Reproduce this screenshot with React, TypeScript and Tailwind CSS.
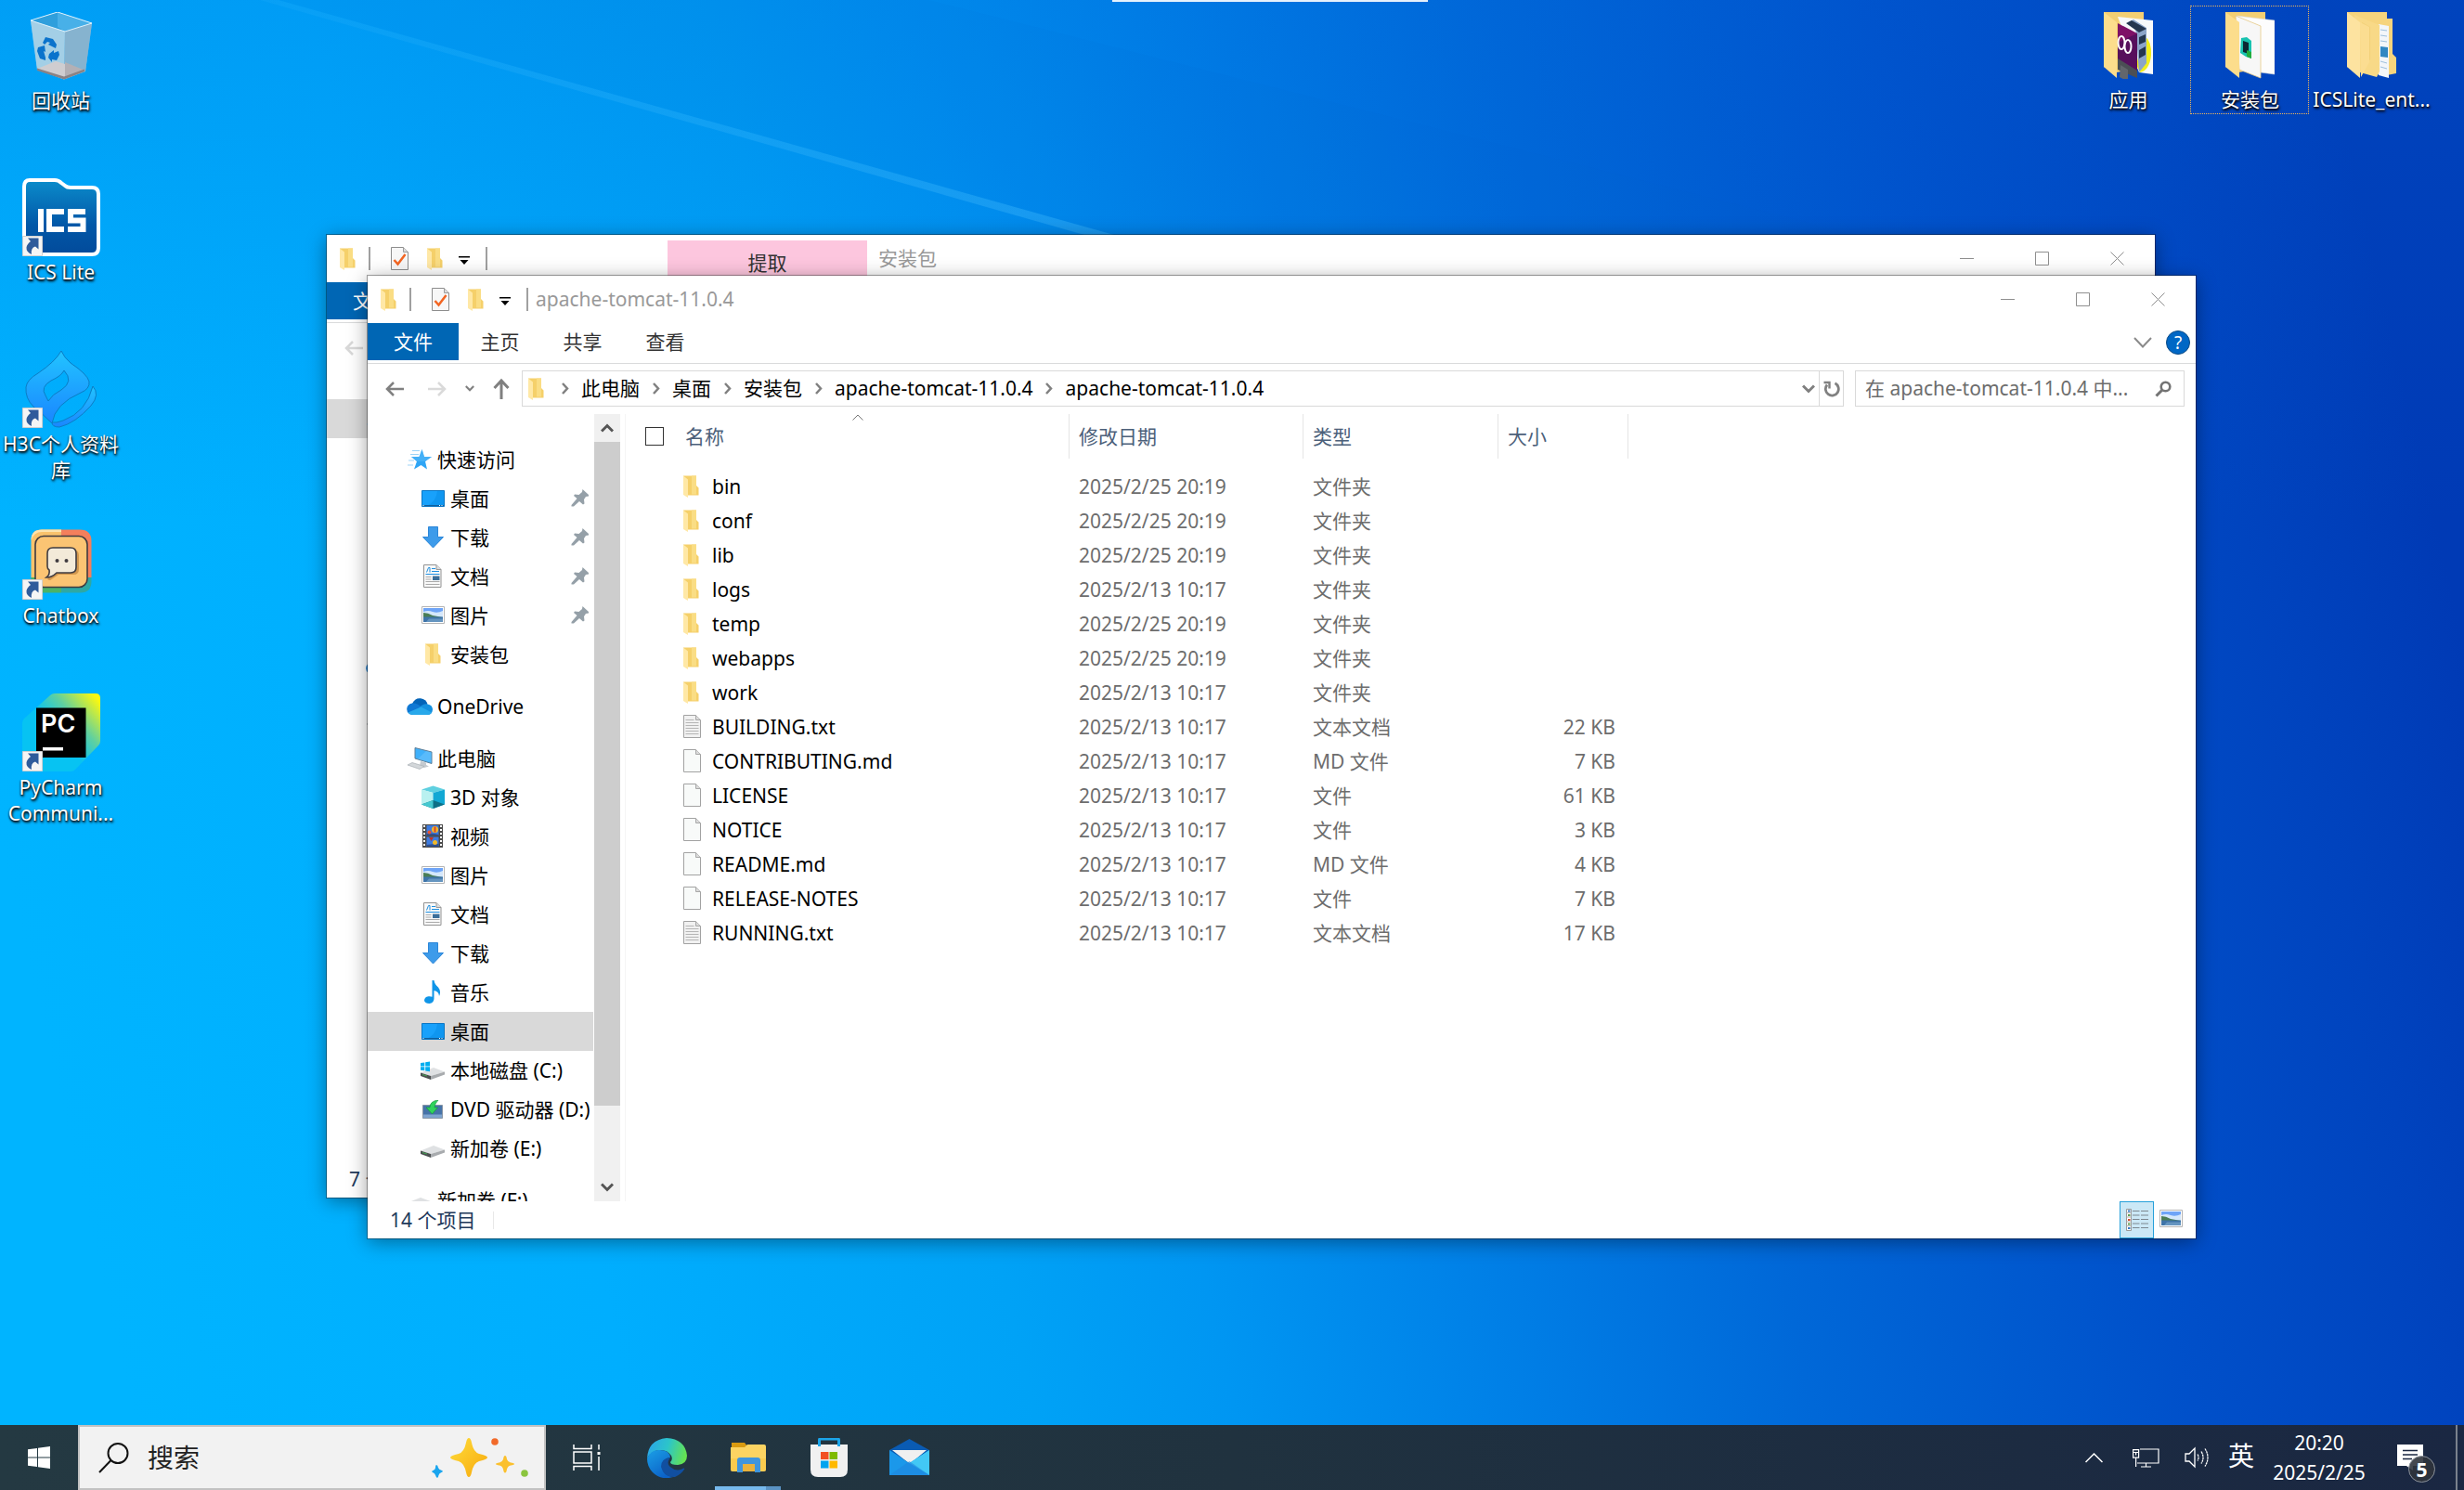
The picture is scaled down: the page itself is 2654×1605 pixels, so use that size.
import { useState } from 'react';
import type { ReactNode } from 'react';

type FileKind = 'folder' | 'text' | 'blank';

interface FileEntry {
  name: string;
  date: string;
  type: string;
  size?: string;
  kind: FileKind;
}

interface NavEntry {
  id: string;
  label: string;
  icon: ReactNode;
  level: 0 | 1;
  pinned?: boolean;
}

const FILES: FileEntry[] = [
  { name: 'bin', date: '2025/2/25 20:19', type: '文件夹', kind: 'folder' },
  { name: 'conf', date: '2025/2/25 20:19', type: '文件夹', kind: 'folder' },
  { name: 'lib', date: '2025/2/25 20:19', type: '文件夹', kind: 'folder' },
  { name: 'logs', date: '2025/2/13 10:17', type: '文件夹', kind: 'folder' },
  { name: 'temp', date: '2025/2/25 20:19', type: '文件夹', kind: 'folder' },
  { name: 'webapps', date: '2025/2/25 20:19', type: '文件夹', kind: 'folder' },
  { name: 'work', date: '2025/2/13 10:17', type: '文件夹', kind: 'folder' },
  { name: 'BUILDING.txt', date: '2025/2/13 10:17', type: '文本文档', size: '22 KB', kind: 'text' },
  { name: 'CONTRIBUTING.md', date: '2025/2/13 10:17', type: 'MD 文件', size: '7 KB', kind: 'blank' },
  { name: 'LICENSE', date: '2025/2/13 10:17', type: '文件', size: '61 KB', kind: 'blank' },
  { name: 'NOTICE', date: '2025/2/13 10:17', type: '文件', size: '3 KB', kind: 'blank' },
  { name: 'README.md', date: '2025/2/13 10:17', type: 'MD 文件', size: '4 KB', kind: 'blank' },
  { name: 'RELEASE-NOTES', date: '2025/2/13 10:17', type: '文件', size: '7 KB', kind: 'blank' },
  { name: 'RUNNING.txt', date: '2025/2/13 10:17', type: '文本文档', size: '17 KB', kind: 'text' },
];

const NAV_GROUPS: NavEntry[][] = [
  [
    { id: 'quick', label: '快速访问', icon: <StarIcon />, level: 0 },
    { id: 'q-desktop', label: '桌面', icon: <DesktopIcon />, level: 1, pinned: true },
    { id: 'q-downloads', label: '下载', icon: <DownloadIcon />, level: 1, pinned: true },
    { id: 'q-documents', label: '文档', icon: <DocumentsIcon />, level: 1, pinned: true },
    { id: 'q-pictures', label: '图片', icon: <PictureIcon />, level: 1, pinned: true },
    { id: 'q-packages', label: '安装包', icon: <FolderIcon />, level: 1 },
  ],
  [{ id: 'onedrive', label: 'OneDrive', icon: <OneDriveIcon />, level: 0 }],
  [
    { id: 'pc', label: '此电脑', icon: <ComputerIcon />, level: 0 },
    { id: 'objects', label: '3D 对象', icon: <CubeIcon />, level: 1 },
    { id: 'videos', label: '视频', icon: <VideoIcon />, level: 1 },
    { id: 'pictures', label: '图片', icon: <PictureIcon />, level: 1 },
    { id: 'documents', label: '文档', icon: <DocumentsIcon />, level: 1 },
    { id: 'downloads', label: '下载', icon: <DownloadIcon />, level: 1 },
    { id: 'music', label: '音乐', icon: <MusicIcon />, level: 1 },
    { id: 'desktop', label: '桌面', icon: <DesktopIcon />, level: 1 },
    { id: 'drive-c', label: '本地磁盘 (C:)', icon: <DriveIcon system />, level: 1 },
    { id: 'drive-d', label: 'DVD 驱动器 (D:)', icon: <DvdIcon />, level: 1 },
    { id: 'drive-e', label: '新加卷 (E:)', icon: <DriveIcon />, level: 1 },
  ],
  [{ id: 'drive-f', label: '新加卷 (F:)', icon: <DriveIcon />, level: 0 }],
];

export default function App() {
  return (
    <div className="relative flex h-screen flex-col overflow-hidden bg-[#0078e0] font-['Noto_Sans','Noto_Sans_CJK_SC',sans-serif] text-[21px] leading-7 text-black">
      <Wallpaper />

      <main className="relative flex-1">
        <div className="flex justify-between">
          <div className="flex flex-col gap-[17px] pt-[7px]">
            <DesktopShortcut label="回收站" icon={<RecycleBinIcon />} />
            <DesktopShortcut label="ICS Lite" icon={<IcsIcon />} linked />
            <DesktopShortcut label="H3C个人资料库" icon={<H3cIcon />} linked />
            <DesktopShortcut label="Chatbox" icon={<ChatboxIcon />} linked />
            <DesktopShortcut label="PyCharm Communi..." icon={<PyCharmIcon />} linked />
          </div>
          <div className="flex pr-[34px] pt-1.5">
            <DesktopShortcut label="应用" icon={<AppsFolderIcon />} />
            <DesktopShortcut label="安装包" icon={<PackagesFolderIcon />} selected />
            <DesktopShortcut label="ICSLite_ent..." icon={<FilesFolderIcon />} />
          </div>
        </div>

        {/* Edge of the remote session bar */}
        <div className="absolute left-[1198px] top-0 h-[2px] w-[340px] bg-white/90" />

        {/* Window behind */}
        <div className="absolute bottom-[245px] left-[352px] right-[333px] top-[253px]">
          <ExplorerWindow
            title="安装包"
            toolTab="提取"
            path={['此电脑', '桌面', '安装包']}
            files={[]}
            count={7}
            activeNav="quick"
            idPrefix="packages"
            canGoBack={false}
          />
        </div>

        {/* Window in front */}
        <div className="absolute bottom-[201px] left-[396px] right-[289px] top-[297px]">
          <ExplorerWindow
            title="apache-tomcat-11.0.4"
            path={['此电脑', '桌面', '安装包', 'apache-tomcat-11.0.4', 'apache-tomcat-11.0.4']}
            files={FILES}
            count={14}
            activeNav="desktop"
            idPrefix="tomcat"
            canGoBack
          />
        </div>
      </main>

      <Taskbar />
    </div>
  );
}

/* Desktop */

function Wallpaper() {
  return (
    <svg
      className="absolute inset-0 h-full w-full"
      viewBox="0 0 2654 1605"
      preserveAspectRatio="none"
      aria-hidden="true"
    >
      <defs>
        <linearGradient id="wall-base" x1="0" y1="0.57" x2="1" y2="0.43">
          <stop offset="0" stopColor="#00b4ff" />
          <stop offset="0.2" stopColor="#00aefe" />
          <stop offset="0.36" stopColor="#00a2f6" />
          <stop offset="0.44" stopColor="#0096f2" />
          <stop offset="0.54" stopColor="#0082e8" />
          <stop offset="0.67" stopColor="#0068d8" />
          <stop offset="0.82" stopColor="#0050ca" />
          <stop offset="0.93" stopColor="#0043be" />
          <stop offset="1" stopColor="#003ab5" />
        </linearGradient>
        <linearGradient id="wall-top" x1="0" y1="0" x2="0" y2="1">
          <stop offset="0" stopColor="#0062d8" stopOpacity="0.24" />
          <stop offset="0.35" stopColor="#0062d8" stopOpacity="0" />
        </linearGradient>
        <linearGradient id="wall-beam" x1="0" y1="0" x2="1" y2="0">
          <stop offset="0" stopColor="#5cc8ff" stopOpacity="0.08" />
          <stop offset="1" stopColor="#5cc8ff" stopOpacity="0.28" />
        </linearGradient>
      </defs>
      <rect width="2654" height="1605" fill="url(#wall-base)" />
      <rect width="2654" height="1605" fill="url(#wall-top)" />
      <path d="M300 0L1200 253H1168L280 0Z" fill="url(#wall-beam)" />
      <path d="M300 0L1200 253H2000L1000 0Z" fill="#0062d0" fillOpacity="0.06" />
    </svg>
  );
}

function DesktopShortcut({
  label,
  icon,
  linked,
  selected,
}: {
  label: string;
  icon: ReactNode;
  linked?: boolean;
  selected?: boolean;
}) {
  return (
    <button className="relative flex h-[168px] w-[131px] flex-col items-center gap-[3px] text-white">
      {selected && (
        <span className="absolute left-px top-0 h-[117px] w-[128px] border border-dotted border-[#f0b75a]" />
      )}
      <span className="relative flex h-[84px] w-[84px] shrink-0 items-center justify-center">
        {icon}
        {linked && (
          <span className="absolute bottom-0 left-0">
            <ShortcutArrow />
          </span>
        )}
      </span>
      <span className="w-full break-words text-center [text-shadow:0_1px_2px_#000,1px_2px_3px_#000]">{label}</span>
    </button>
  );
}

/* Explorer */

interface ExplorerWindowProps {
  title: string;
  toolTab?: string;
  path: string[];
  files: FileEntry[];
  count: number;
  activeNav: string;
  idPrefix: string;
  canGoBack: boolean;
}

function ExplorerWindow({
  title,
  toolTab,
  path,
  files,
  count,
  activeNav,
  idPrefix,
  canGoBack,
}: ExplorerWindowProps) {
  const [selected, setSelected] = useState(activeNav);

  return (
    <section className="flex h-full flex-col overflow-hidden bg-white shadow-[0_4px_20px_rgba(0,0,0,0.4)] ring-1 ring-black/35">
      {/* Title bar */}
      <header className="flex h-[51px] shrink-0 items-center pl-3.5 text-[#999]">
        <FolderIcon />
        <span className="ml-3.5 h-[25px] w-[2px] bg-[#a0a0a0]" />
        <button aria-label="属性" className="ml-3 flex w-[38px] justify-center">
          <CheckDocIcon />
        </button>
        <button aria-label="新建文件夹" className="flex w-[38px] justify-center">
          <FolderIcon />
        </button>
        <button aria-label="自定义快速访问工具栏" className="flex w-[26px] justify-center">
          <QuickMenuIcon />
        </button>
        <span className="ml-2.5 h-[25px] w-[2px] bg-[#a0a0a0]" />
        {toolTab && (
          <span className="ml-[194px] mr-1 flex w-[215px] items-center justify-center self-stretch bg-[#fdc6de] pt-2 text-[#333] [clip-path:inset(6px_0_0_0)]">
            {toolTab}
          </span>
        )}
        <h1 className="ml-2 flex-1 pb-px">{title}</h1>
        <button aria-label="最小化" className="flex h-full w-[81px] items-center justify-center">
          <svg width="15" height="15" stroke="#8f8f8f" fill="none">
            <path d="M0 7.5h15" />
          </svg>
        </button>
        <button aria-label="最大化" className="flex h-full w-[81px] items-center justify-center">
          <svg width="15" height="15" stroke="#8f8f8f" fill="none">
            <path d="M.5 .5h14v14H.5z" />
          </svg>
        </button>
        <button aria-label="关闭" className="flex h-full w-[81px] items-center justify-center">
          <svg width="15" height="15" stroke="#8f8f8f" fill="none">
            <path d="M.5 .5l14 14M14.5 .5l-14 14" />
          </svg>
        </button>
      </header>

      {/* Ribbon tabs */}
      <div className="flex h-11 shrink-0 items-start border-b border-[#dadbdc] pr-1.5 text-[#333]">
        <button className="h-10 w-[98px] bg-[#0066b4] text-white">文件</button>
        <button className="h-10 w-[89px]">主页</button>
        <button className="h-10 w-[89px]">共享</button>
        <button className="h-10 w-[89px]">查看</button>
        <div className="ml-auto flex h-[42px] items-center gap-[15px]">
          <button aria-label="展开功能区">
            <svg width="20" height="12" fill="none" stroke="#8a8a8a" strokeWidth="2">
              <path d="M1 1l9 9.500 9-9.500" />
            </svg>
          </button>
          <button
            aria-label="帮助"
            className="h-[26px] w-[26px] rounded-full border border-[#0a4a86] bg-[#0067c5] text-[19px] leading-6 text-white"
          >
            ?
          </button>
        </div>
      </div>

      {/* Address bar */}
      <div className="flex shrink-0 items-center pb-2 pl-1.5 pr-3 pt-[7px]">
        <button aria-label="后退" className="flex w-[46px] justify-center">
          <ArrowIcon color={canGoBack ? '#808080' : '#d9d9d9'} />
        </button>
        <button aria-label="前进" className="flex w-[46px] justify-center">
          <span className="rotate-180">
            <ArrowIcon color="#dadada" />
          </span>
        </button>
        <button aria-label="最近浏览的位置" className="flex w-6 justify-center">
          <ChevronDownIcon small />
        </button>
        <button aria-label="上移" className="flex w-11 justify-center">
          <svg width="18" height="23" fill="none" stroke="#808080" strokeWidth="3">
            <path d="M9 23V3M1.500 11L9 3l7.500 8" />
          </svg>
        </button>
        <div className="flex h-[39px] flex-1 items-center border border-[#d9d9d9] pl-1.5">
          <span className="mr-[5px]">
            <FolderIcon />
          </span>
          {path.map((part, i) => (
            <div key={i} className="flex items-center">
              <span className="flex w-[35px] justify-center">
                <svg width="8" height="13" fill="none" stroke="#808080" strokeWidth="2.5">
                  <path d="M1 1l5 5.500-5 5.500" />
                </svg>
              </span>
              <button className="pb-px">{part}</button>
            </div>
          ))}
          <button aria-label="历史记录" className="ml-auto mr-[3px] flex w-4 justify-center">
            <ChevronDownIcon />
          </button>
          <button
            aria-label="刷新"
            className="flex h-full w-[26px] items-center justify-center border-l border-[#d9d9d9]"
          >
            <RefreshIcon />
          </button>
        </div>
        <label className="ml-3 flex h-[39px] w-[355px] items-center border border-[#d9d9d9] pl-2.5 pr-[13px]">
          <input
            type="text"
            aria-label="搜索"
            placeholder={`在 ${title} 中...`}
            className="min-w-0 flex-1 bg-transparent pb-px outline-none placeholder:text-[#6d6d6d]"
          />
          <SearchGlyph />
        </label>
      </div>

      {/* Body */}
      <div className="flex min-h-0 flex-1">
        <nav className="w-[243px] overflow-hidden pt-7">
          <div className="flex flex-col gap-3.5">
            {NAV_GROUPS.map((group, g) => (
              <ul key={g}>
                {group.map((item) => (
                  <li key={item.id}>
                    <button
                      onClick={() => setSelected(item.id)}
                      className={`flex h-[42px] w-full items-center gap-[5px] whitespace-nowrap pb-px text-left ${
                        item.level === 0 ? 'pl-[42px]' : 'pl-14'
                      } ${selected === item.id ? 'bg-[#d9d9d9]' : ''}`}
                    >
                      <span className="flex w-7 shrink-0 justify-center">{item.icon}</span>
                      {item.label}
                      {item.pinned && (
                        <span className="ml-auto pr-[5px]">
                          <PinIcon />
                        </span>
                      )}
                    </button>
                  </li>
                ))}
              </ul>
            ))}
          </div>
        </nav>
        <div className="ml-px flex w-7 shrink-0 flex-col bg-[#f0f0f0]">
          <button aria-label="向上滚动" className="flex h-[30px] items-center justify-center">
            <span className="rotate-180">
              <ChevronDownIcon dark />
            </span>
          </button>
          <div className="h-[715px] bg-[#cdcdcd]" />
          <button aria-label="向下滚动" className="mt-auto flex h-[30px] items-center justify-center">
            <ChevronDownIcon dark />
          </button>
        </div>
        <div className="w-1.5 shrink-0 border-r border-[#f5f5f5]" />

        <FileTable files={files} idPrefix={idPrefix} />
      </div>

      {/* Status bar */}
      <footer className="flex h-10 shrink-0 items-center pl-6 text-[#1e395b]">
        <span>{count} 个项目</span>
        <span className="ml-[18px] h-[19px] w-px bg-[#e8e8e8]" />
        <button
          aria-label="详细信息"
          className="ml-auto flex h-10 w-[37px] items-center justify-center border border-[#26a0da] bg-[#cbe8f6]"
        >
          <DetailsIcon />
        </button>
        <button aria-label="大图标" className="flex w-[45px] justify-start pb-1 pl-1.5">
          <PictureIcon />
        </button>
      </footer>
    </section>
  );
}

function FileTable({ files, idPrefix }: { files: FileEntry[]; idPrefix: string }) {
  return (
    <div className="min-w-0 flex-1 overflow-hidden">
      <table className="w-[1080px] table-fixed border-separate border-spacing-0">
        <colgroup>
          <col className="w-[478px]" />
          <col className="w-[252px]" />
          <col className="w-[210px]" />
          <col className="w-[140px]" />
        </colgroup>
        <thead className="text-[#4c607a]">
          <tr className="h-12">
            <th className="relative border-r border-[#e5e5e5] p-0 pb-px font-normal">
              <span className="absolute inset-x-0 top-0 flex justify-center pl-[22px]">
                <svg width="12" height="7" fill="none" stroke="#777">
                  <path d="M.5 6.500L6 1l5.500 5.500" />
                </svg>
              </span>
              <span className="flex items-center gap-[23px] pl-[21px]">
                <input
                  type="checkbox"
                  id={`${idPrefix}-all`}
                  aria-label="全选"
                  className="h-5 w-5 appearance-none border border-[#333] bg-white checked:bg-[#0078d7]"
                />
                <label htmlFor={`${idPrefix}-all`}>名称</label>
              </span>
            </th>
            <HeaderCell>修改日期</HeaderCell>
            <HeaderCell>类型</HeaderCell>
            <HeaderCell>大小</HeaderCell>
          </tr>
        </thead>
        <tbody className="text-[#6d6d6d] before:block before:h-[11px] before:content-['']">
          {files.map((file) => (
            <tr key={file.name} className="h-[37px]">
              <td className="p-0 pl-[62px] text-black">
                <span className="flex items-center gap-3">
                  <span className="flex w-[19px]">
                    {file.kind === 'folder' ? <FolderIcon /> : <PageIcon lined={file.kind === 'text'} />}
                  </span>
                  {file.name}
                </span>
              </td>
              <td className="p-0 pl-2.5">{file.date}</td>
              <td className="p-0 pl-2.5">{file.type}</td>
              <td className="p-0 pr-3.5 text-right">{file.size}</td>
            </tr>
          ))}
        </tbody>
      </table>
    </div>
  );
}

function HeaderCell({ children }: { children: ReactNode }) {
  return <th className="border-r border-[#e5e5e5] p-0 pb-px pl-2.5 text-left font-normal">{children}</th>;
}

/* Taskbar */

function Taskbar() {
  return (
    <footer className="relative flex h-[70px] shrink-0 items-stretch bg-linear-to-r from-[#243942] via-[#20323f] to-[#1a2742] text-white">
      <button aria-label="开始" className="flex w-[84px] items-center justify-center">
        <svg width="24" height="24" fill="#fff">
          <path d="M0 3.300L10 2v9.500H0zM11 1.800L24 0v11.500H11zM0 12.500h10V22L0 20.700zM11 12.500h13V24l-13-1.800z" />
        </svg>
      </button>
      <label className="flex w-[504px] items-center border-2 border-[#c2c2c2] bg-[#f2f2f2] pl-5 pr-4">
        <svg width="33" height="33" fill="none" stroke="#111" strokeWidth="2">
          <circle cx="21" cy="11.500" r="10.500" />
          <path d="M13.500 19L1 32" />
        </svg>
        <input
          type="text"
          aria-label="搜索"
          placeholder="搜索"
          className="ml-5 min-w-0 flex-1 bg-transparent text-[28px] leading-10 outline-none placeholder:text-[#222]"
        />
        <SparklesIcon />
      </label>
      <TaskButton label="任务视图">
        <TaskViewIcon />
      </TaskButton>
      <TaskButton label="Microsoft Edge">
        <EdgeIcon />
      </TaskButton>
      <TaskButton label="文件资源管理器" running>
        <ExplorerIcon />
      </TaskButton>
      <TaskButton label="Microsoft Store">
        <StoreIcon />
      </TaskButton>
      <TaskButton label="邮件">
        <MailIcon />
      </TaskButton>

      {/* Tray */}
      <div className="ml-auto flex items-center">
        <button aria-label="显示隐藏的图标" className="flex w-10 justify-center">
          <svg width="19" height="11" fill="none" stroke="#fff" strokeWidth="1.500">
            <path d="M.5 10l9-9 9 9" />
          </svg>
        </button>
        <button aria-label="网络" className="flex w-[72px] justify-center">
          <svg width="29" height="21" fill="none" stroke="#fff" strokeWidth="1.200">
            <path d="M8 1h20v15H5M.6 1.600h6v8.500h-6zM.6 4.500h6M3.600 4.500v3M3.600 10v10M14.500 16v4M9 20h11" />
          </svg>
        </button>
        <button aria-label="音量" className="flex w-10 justify-center">
          <svg width="28" height="24" fill="none" stroke="#fff" strokeWidth="1.300">
            <path d="M1 8h4l6-6v20l-6-6H1z" />
            <path d="M14 8.500q2 3.500 0 7M18 5.500q4 6.500 0 13M22 2.500q6 9.500 0 19" strokeDasharray="2.500 .6" />
          </svg>
        </button>
        <button className="w-[54px] pb-1 text-[28px] leading-10">英</button>
        <button className="flex w-[114px] flex-col items-center pb-px leading-8">
          <span>20:20</span>
          <span>2025/2/25</span>
        </button>
        <button aria-label="通知" className="relative ml-[27px] flex w-[63px] self-stretch pt-[21px]">
          <svg width="28" height="28" className="shrink-0">
            <path d="M0 0h28v23H17v5l-7-5H0z" fill="#fff" />
            <path d="M6 6.500h16M6 11h16M6 15.500h10" stroke="#1a2742" strokeWidth="1.300" />
          </svg>
          <span className="absolute left-3 top-[33px] flex h-[29px] w-[29px] items-center justify-center rounded-full border border-[#8b929c] bg-[#30343c]/90 font-bold">
            5
          </span>
        </button>
        <button aria-label="显示桌面" className="h-full w-[9px] border-l-2 border-[#7a828d]" />
      </div>
    </footer>
  );
}

function TaskButton({
  label,
  running,
  children,
}: {
  label: string;
  running?: boolean;
  children: ReactNode;
}) {
  return (
    <button aria-label={label} className="relative flex w-[87px] items-center justify-center">
      {children}
      {running && (
        <span className="absolute bottom-0 left-2 right-2 flex h-1">
          <span className="flex-1 bg-[#76b9ed]" />
          <span className="w-4 bg-[#5a93c4]" />
        </span>
      )}
    </button>
  );
}

/* Small glyphs */

function ArrowIcon({ color }: { color: string }) {
  return (
    <svg width="20" height="16" fill="none" stroke={color} strokeWidth="2.500">
      <path d="M20 8H2.500M9 1L2 8l7 7" />
    </svg>
  );
}

function ChevronDownIcon({ small, dark }: { small?: boolean; dark?: boolean }) {
  return (
    <svg
      width={small ? 10 : 14}
      height={small ? 7 : 10}
      viewBox="0 0 14 10"
      fill="none"
      stroke={dark ? '#555' : '#808080'}
      strokeWidth="3"
    >
      <path d="M1 1.500L7 7.500l6-6" />
    </svg>
  );
}

function RefreshIcon() {
  return (
    <svg width="18" height="18" viewBox="0 0 18 18" fill="none" stroke="#808080" strokeWidth="2.800">
      <path d="M12.500 2.800A7 7 0 1 1 4 4.500" />
      <path d="M.5 2H6.500V8.500" strokeWidth="2.400" />
    </svg>
  );
}

function SearchGlyph() {
  return (
    <svg width="18" height="18" fill="none" stroke="#737373">
      <circle cx="11.500" cy="6.500" r="4.800" strokeWidth="2.600" />
      <path d="M8 10L1.500 16.500" strokeWidth="3" />
    </svg>
  );
}

function QuickMenuIcon() {
  return (
    <svg width="12" height="9" className="mt-1">
      <path d="M0 0h12v1.500H0zM1.500 4h9L6 9z" fill="#000" />
    </svg>
  );
}

function CheckDocIcon() {
  return (
    <svg width="19" height="25">
      <path d="M.5 .5h13l5 5v19H.5z" fill="#f7f7f7" stroke="#8d8d8d" />
      <path d="M13.500 .5v5h5" fill="#ddd" stroke="#9d9d9d" />
      <path d="M3.500 14l4 4.500L15.500 8" fill="none" stroke="#f26522" strokeWidth="2.500" />
    </svg>
  );
}

function PinIcon() {
  return (
    <svg width="19" height="19" fill="#95a0a8">
      <path d="M12.500 0L19 6v1.500l-3 .5-2 3 .5 4.500-1.500 1-4-3.500L3 18.500H.5V17L6.500 10 3 7l1-1.500 4.500.5 3.500-3z" />
    </svg>
  );
}

function DetailsIcon() {
  return (
    <svg width="24" height="24" fill="none">
      <path d="M.5 .5h5v23h-5z" fill="#fff" stroke="#999" />
      <path d="M.5 4.500h5M.5 9h5M.5 14h5M.5 18.500h5" stroke="#b5b5b5" />
      <path d="M2 2.500h2.500" stroke="#3477c4" strokeWidth="2" />
      <path d="M2 7h2.500" stroke="#5a9e50" strokeWidth="2" />
      <path d="M2 12h2.500" stroke="#d24b36" strokeWidth="2" />
      <path d="M2 16.500h2.500" stroke="#5a9e50" strokeWidth="2" />
      <path d="M2 21h2.500" stroke="#3477c4" strokeWidth="2" />
      <path
        d="M7 2.500h7.500M16 2.500h8M7 7h7.500M16 7h8M7 11.500h7.500M16 11.500h8M7 16h7.500M16 16h8M7 20.500h7.500M16 20.500h8"
        stroke="#7d8890"
      />
    </svg>
  );
}

/* File and navigation icons */

function FolderIcon() {
  return (
    <svg width="17" height="24">
      <path d="M0 .5h14v10.500l2.500 2.500v8H4z" fill="#f5d06a" />
      <path d="M9 .5h5v20H9z" fill="#fadd84" />
      <path d="M0 .5l5 4V24L0 21z" fill="#ffe8a6" />
    </svg>
  );
}

function PageIcon({ lined }: { lined: boolean }) {
  return (
    <svg width="19" height="25">
      <path d="M.5 .5h13l5 5v19H.5z" fill={lined ? '#f1f1f1' : '#f8faf9'} stroke="#a2a2a2" />
      <path d="M13.500 .5v5h5" fill="#dcdcdc" stroke="#a8a8a8" />
      {lined && <path d="M2.500 5.500h9M2.500 8.500h14M2.500 11.500h14M2.500 14.500h14M2.500 17.500h14M2.500 20.500h14" stroke="#b5b5b5" />}
    </svg>
  );
}

function StarIcon() {
  return (
    <svg width="26" height="22">
      <path d="M15.500 0l2.500 8h8l-7 5 2 8.500-6.500-4.500-7.500 4.500 3-8.500L4 8h8.500z" fill="#2fa5f5" />
      <path d="M15.500 0l2.500 8h8l-7 5-9 0L4 8h8.500z" fill="#54b8f9" fillOpacity="0.6" />
      <path d="M5 1.500h8M3 5.500h9M1 12h6M0 17h6" stroke="#9dd3f7" />
    </svg>
  );
}

function DesktopIcon() {
  return (
    <svg width="25" height="18">
      <path d="M.5 .5h24v17H.5z" fill="#18a1fb" stroke="#0b76c4" />
      <path d="M17 1h7v16H6q10-5 11-16z" fill="#0f96f0" />
      <path d="M1 16.500h23" stroke="#0e5f9e" />
      <path d="M1.500 16.500h1M19 16.500h1M21.500 16.500h1" stroke="#fff" />
    </svg>
  );
}

function DownloadIcon() {
  return (
    <svg width="23" height="24">
      <path d="M6.500 .5h10v11h6L11.500 23 .5 11.500h6z" fill="#3d9bea" stroke="#2c86d8" />
    </svg>
  );
}

function DocumentsIcon() {
  return (
    <svg width="20" height="25">
      <path d="M.5 .5h13.500l5 5v19H.5z" fill="#f9f9f9" stroke="#929292" />
      <path d="M14 .5v5h5" fill="#ddd" stroke="#999" />
      <path d="M3.500 8.500l2-5h1.500v5M9 4.500h4M9 7.500h8M2.500 10.500h15" fill="none" stroke="#1f8fe0" />
      <path d="M2.500 13.500h6M2.500 16h6M2.500 18.500h15M2.500 21.500h15" stroke="#aaa" />
      <path d="M10 12.500h7.500v4.500H10z" fill="#3c6f9a" />
    </svg>
  );
}

function PictureIcon() {
  return (
    <svg width="25" height="19">
      <path d="M.5 .5h24v18H.5z" fill="#fff" stroke="#b4b4b4" />
      <path d="M2 2h21v7H2z" fill="#6ea4f7" />
      <path d="M2 6q5-2 10 0t11-1v7H2z" fill="#d4e7fb" />
      <path d="M2 7q5 0 10 3l11 2H2z" fill="#4b7d55" />
      <path d="M2 11.500h21V17H2z" fill="#3f74a8" />
      <path d="M8 13.500h15V17H5z" fill="#7fabd0" fillOpacity="0.6" />
    </svg>
  );
}

function OneDriveIcon() {
  return (
    <svg width="28" height="18">
      <path d="M6 6Q9-.5 15 .2q6 .8 7.500 6.300L14 11z" fill="#0364b8" />
      <path d="M6 5.500Q12 5 16 10L8 18Q.5 18 .2 12 .3 6.500 6 5.500z" fill="#0f78d4" />
      <path d="M14 10Q18 5.500 22.500 6.500 28 7.500 28 12.500 27.500 18 22 18H7z" fill="#1490df" />
      <path d="M15.500 9.500L27 15.500Q25.500 18 22 18H7Q3 18 1.500 15.500z" fill="#28a8ea" />
    </svg>
  );
}

function ComputerIcon() {
  return (
    <svg width="27" height="24">
      <path d="M8 .5l18 4.500v12.500L8 12z" fill="#3fb0fa" stroke="#5d7d96" />
      <path d="M20 4l5.500 1.500v11L11 12.500z" fill="#74c6fb" fillOpacity="0.5" />
      <path d="M14 15l6 1.500v2.500l3 1.500-5 1.500-5-2z" fill="#c5cacf" />
      <path d="M5 16.500l13 4-5 3L0 19z" fill="#d3d7da" stroke="#a9afb4" strokeWidth=".7" />
    </svg>
  );
}

function CubeIcon() {
  return (
    <svg width="25" height="25">
      <path d="M12.500 .5L25 4.500 12.500 8 0 4.500z" fill="#5fd0e0" />
      <path d="M0 4.500L12.500 8v17L0 20.500z" fill="#b9f1f0" />
      <path d="M25 4.500L12.500 8v17L25 20.500z" fill="#12a8d4" />
      <path d="M0 20.500l12.500-4.500L25 20.500 12.500 25z" fill="#0d6f86" />
      <path d="M0 20.500l12.500-4.500V25z" fill="#45c8cf" />
    </svg>
  );
}

function VideoIcon() {
  return (
    <svg width="22" height="25">
      <path d="M0 0h22v25H0z" fill="#4a4a4a" />
      <path d="M4.500 1h13v11h-13zM4.500 13.500h13v10.500h-13z" fill="#3d7be0" />
      <path d="M4.500 10q6-1 13 1v1h-13zM4.500 22q7-1 13-1v3h-13z" fill="#2f4f8f" />
      <circle cx="13.500" cy="5.500" r="3.500" fill="#f3b928" />
      <path d="M12.500 2.500h2v6h-2z" fill="#d8432e" />
      <circle cx="7.500" cy="8.500" r="2" fill="#e9542f" />
      <path d="M7 14h5l-2.500 4z" fill="#c8331f" />
      <circle cx="13.500" cy="19.500" r="2.500" fill="#f3b928" />
      <path d="M2 1v24M20 1v24" stroke="#fff" strokeWidth="2" strokeDasharray="2 2" />
    </svg>
  );
}

function MusicIcon() {
  return (
    <svg width="18" height="25" fill="#0f95e8">
      <path d="M8.500 0h2q.5 4 4.500 7.500 3.500 4 1 9.500-.2-5-5.500-6V20q-.5 4.500-5 5Q1 25 0 22q0-4 4.500-4.800 2.500-.2 4 .5z" />
    </svg>
  );
}

function DriveIcon({ system }: { system?: boolean }) {
  return (
    <svg width="26" height="20">
      <path d="M0 12.500L14 7l12 4.500L11 16z" fill="#dfe1e3" />
      <path d="M11 16l15-4.500v3L11 20z" fill="#a8abae" />
      <path d="M0 12.500L11 16v4L0 16z" fill="#4b4f50" />
      <path d="M2 14.500l5 1.500" stroke="#43a552" />
      {system && <path d="M0 2l4.300-.6v4H0zM5.200 1.200L10 .5v4.900H5.200zM0 6.300h4.300v4L0 9.700zM5.200 6.300H10v4.900l-4.800-.7z" fill="#00adef" />}
    </svg>
  );
}

function DvdIcon() {
  return (
    <svg width="22" height="20">
      <path d="M.5 5.500h21v14H.5z" fill="#4673a8" stroke="#8795a5" />
      <path d="M1 15.500h20v3.500H1z" fill="#7ea4cf" />
      <path d="M17 0Q8 1 8 8H4l6.500 7L16.500 8H13Q13 4 17 0z" fill="#30d35c" stroke="#149c3a" strokeWidth=".7" />
    </svg>
  );
}

/* Desktop icons */

function ShortcutArrow() {
  return (
    <svg width="22" height="22">
      <path d="M.5 .5h21v21H.5z" fill="#f5f5f5" stroke="#d0d0d0" />
      <path d="M6 2.500h11.500V14.500L14 11.500q-5 1-4 8.500-6-3-5.500-7.500Q5 9 9 6z" fill="#2f5b9b" />
    </svg>
  );
}

function RecycleBinIcon() {
  return (
    <svg width="66" height="73">
      <path d="M0 9L29 0l37 12-7 52-23 8.500L7 62z" fill="#9fd0ee" fillOpacity="0.6" />
      <path d="M0 9L29 0l37 12-29 9z" fill="#48b0e8" />
      <path d="M29 0v16l8 5L0 9z" fill="#2f9fdc" />
      <path d="M0 9l37 12-1 51.500L7 62z" fill="#a3cfe6" />
      <path d="M66 12l-29 9-1 51.500L59 64z" fill="#86b3cf" />
      <path d="M7 61l20-8 10 3v16z" fill="#cfcdd0" />
      <path d="M59 63L37 54v18z" fill="#b3b0b5" />
      <path d="M7 60.500v2.500l29 9.500 22-8.500v-2.500L36 69.500z" fill="#8a8284" />
      <path d="M0 9L29 0l37 12-29 9z" fill="none" stroke="#dff2fc" />
      <g fill="#0a73cc">
        <path d="M13 33l3-6 8 2 4 6-1 4-8-4 2-2-3-1-3 3z" />
        <path d="M8 38l7-2 1 7-2-1 2 7v3l-6-2-3-8z" />
        <path d="M20 45l5-4v3l5-2 1 4-3 6-5-1v3l-4-5z" />
      </g>
    </svg>
  );
}

function IcsIcon() {
  return (
    <svg width="84" height="84">
      <defs>
        <linearGradient id="ics-fill" x1="0" y1="0" x2="0" y2="1">
          <stop offset="0" stopColor="#0b8ccb" />
          <stop offset="0.6" stopColor="#0258a8" />
          <stop offset="1" stopColor="#024a9a" />
        </linearGradient>
      </defs>
      <path
        d="M8 2h27q4 0 7 3l4 3q2 2 6 2h23q7 0 7 7v58q0 7-7 7H9q-7 0-7-7V9q0-7 6-7z"
        fill="url(#ics-fill)"
        stroke="#fff"
        strokeWidth="4"
      />
      <g fill="none" stroke="#fff" strokeWidth="6">
        <path d="M20 33v25" />
        <path d="M45 36H29v19h16" />
        <path d="M68 36H52v9.500h13.500V55H49" />
      </g>
    </svg>
  );
}

function H3cIcon() {
  return (
    <svg width="78" height="84">
      <defs>
        <linearGradient id="h3c-fill" x1="0" y1="0" x2="0" y2="1">
          <stop offset="0" stopColor="#22c4ff" />
          <stop offset="1" stopColor="#1a86ff" />
        </linearGradient>
      </defs>
      <path
        fillRule="evenodd"
        d="M39 1Q42 8 49 14 67 26 69 34 70 42 60 46 32 58 29 79 20 70 9 61 0 52 1 40q1-8 13-15Q32 13 39 1zM42 22q-3 6-14 11-12 7-6 16l3 6q4-7 14-12 14-9 3-21z"
        fill="url(#h3c-fill)"
        stroke="#0c7cc4"
        strokeWidth="1"
      />
      <path
        d="M73 39q8 9-2 21Q54 79 37 83q-8 0-8-5 4 1 12-2 25-9 32-37z"
        fill="url(#h3c-fill)"
        stroke="#0c7cc4"
        strokeWidth="1"
      />
    </svg>
  );
}

function ChatboxIcon() {
  return (
    <svg width="66" height="69">
      <path d="M33 .5H12Q.5 .5 .5 12v40h32z" fill="#f9c26c" />
      <path d="M33 .5h20Q65.500 .5 65.500 13v39H33z" fill="#f47f5c" />
      <path d="M33 52h32.500v4q0 12.500-12 12.500H33z" fill="#2ea8a4" />
      <path d="M.5 52v4q0 12.500 12 12.500H33V52z" fill="#4bb268" />
      <path d="M12 3h21V.5H12Q.5 .5 .5 12q3-9 11.500-9z" fill="#fde3ae" />
      <rect x="5" y="7.500" width="56" height="55" rx="9" fill="#fbc473" stroke="#3f3b40" strokeWidth="1.600" />
      <path d="M22 23h27q3 1 3 6v14q0 6-6 6H30l-9 6q-4 0-2-3 3-2 2-4z" fill="#c1843f" fillOpacity="0.7" />
      <path
        d="M24 20h19q6 0 6 6v15q0 6-6 6H28q-5 5-11 5 4-3 3-8-2-1-2-4V26q0-6 6-6z"
        fill="#f3ead9"
        stroke="#3f3b40"
        strokeWidth="1.600"
      />
      <circle cx="28.500" cy="34" r="2" fill="#3f3b40" />
      <circle cx="38.500" cy="34" r="2" fill="#3f3b40" />
    </svg>
  );
}

function PyCharmIcon() {
  return (
    <svg width="84" height="84">
      <defs>
        <linearGradient id="pc-fill" x1="0.3" y1="0.6" x2="0.95" y2="0.05">
          <stop offset="0.2" stopColor="#07c3f2" />
          <stop offset="0.55" stopColor="#5fd0a0" />
          <stop offset="1" stopColor="#fcf810" />
        </linearGradient>
      </defs>
      <path d="M35 0h44q5 0 5 5v46q0 3-2 5L57 82q-2 2-5 2H5q-5 0-5-5V32q0-3 2-5L30 2q2-2 5-2z" fill="url(#pc-fill)" />
      <path d="M15 15.500h53.500V69H15z" fill="#000" />
      <path d="M22 58h22v3.500H22z" fill="#fff" />
      <text x="20" y="42" fill="#fff" fontFamily="Inter, sans-serif" fontSize="27" fontWeight="600">
        PC
      </text>
    </svg>
  );
}

function AppsFolderIcon() {
  return (
    <svg width="53" height="73">
      <path d="M0 1h43v60L14 66 0 60z" fill="#f3cf73" />
      <path d="M15 6l38 4v58l-15-2z" fill="#f7f9fb" />
      <path d="M43 26q9 6 8 22-2 16-12 18l-4-8z" fill="#f1ee1c" />
      <path d="M26 12l6-3 14 9v38l-8 10-4-50z" fill="#8ba4c8" />
      <path d="M30 10l16 9-8 4-14-10zM38 28l7-3v8l-7 3zM38 42l7-4v9l-7 4z" fill="#24364f" />
      <path d="M15 13l21 11v42l-21-8z" fill="#7e1166" />
      <path d="M15 34l21-10v40l-21-12z" fill="#57105c" />
      <path d="M15 51l21 13v8l-21-9z" fill="#4b4f55" />
      <path d="M18 58l8 5v13l-9-5z" fill="#62666c" />
      <ellipse cx="19" cy="34" rx="3.500" ry="7" fill="none" stroke="#fff" strokeWidth="2" />
      <ellipse cx="26" cy="38" rx="3.500" ry="7" fill="none" stroke="#fff" strokeWidth="2" />
      <path d="M0 1l14 11v60L0 60z" fill="#fcdd8c" />
    </svg>
  );
}

function PackagesFolderIcon() {
  return (
    <svg width="53" height="73">
      <path d="M0 1h43v60L14 66 0 60z" fill="#f3cf73" />
      <path d="M12 5l41 5v58l-15-2z" fill="#fdfdfd" stroke="#dcdcdc" strokeWidth=".6" />
      <path d="M11 5l27 11v56l-23-9z" fill="#f7f7f7" stroke="#e6c987" strokeWidth=".8" />
      <path d="M17 29l6-1 5 4v19l-6-2-6-4z" fill="#19c3b0" />
      <path d="M19 32l6 2v12l-6-2z" fill="#0c2733" />
      <path d="M23 42l5 2v7l-5-2z" fill="#22ad3d" />
      <path d="M0 1l15 11v60L0 60z" fill="#fcdd8c" />
    </svg>
  );
}

function FilesFolderIcon() {
  return (
    <svg width="53" height="73">
      <path d="M0 1h43v7h6v38l4 4v17l-10 2L14 66 0 60z" fill="#f6d47d" />
      <path d="M34 14l11 2v56l-11-3z" fill="#f3f6f9" />
      <path d="M36 20l7 1M36 26l7 1M36 32l7 1M36 54l7 2M36 60l7 2" stroke="#9fc0dc" />
      <path d="M36 38l8 1v11l-8-1z" fill="#3187c2" />
      <path d="M8 4l27 11v50l-3 6-18-5z" fill="#f8d987" />
      <path d="M16 12l9 5v35l-9 10z" fill="#efca6f" fillOpacity="0.6" />
      <path d="M0 1l14 11v60L0 60z" fill="#fde3a0" />
      <path d="M14 12l10 5v38l-9 16z" fill="#fbdd91" />
    </svg>
  );
}

/* Taskbar icons */

function SparklesIcon() {
  return (
    <svg width="106" height="44">
      <defs>
        <linearGradient id="spark" x1="0" y1="0" x2="1" y2="1">
          <stop offset="0" stopColor="#ffdd3c" />
          <stop offset="1" stopColor="#f7a90c" />
        </linearGradient>
      </defs>
      <path
        d="M41 1q2 0 3 5 2 10 8 12 9 2 9 4t-9 4q-6 2-8 12-1 5-3 5t-3-5q-2-10-8-12-9-2-9-4t9-4q6-2 8-12 1-5 3-5z"
        fill="url(#spark)"
      />
      <path d="M80 20q1.500 0 2 4 1 3 4 3.500 4 .7 4 1.500t-4 1.500q-3 .5-4 4-.5 4-2 4t-2-4q-1-3.500-4-4-4-.7-4-1.500t4-1.500q3-.5 4-3.500.5-4 2-4z" fill="#fbc02d" />
      <path d="M6 30q1.500 0 2 3 .5 2 4 3 2 .8-.5 2-2.500 1-3 3-.5 3-1.500 3T5 41q-.5-2-3-3-2-1 .5-2T5 33q0-3 1-3z" fill="#1aa5ee" />
      <circle cx="69" cy="5" r="3.800" fill="#f26a2a" />
      <circle cx="101" cy="39" r="3.800" fill="#8bc53f" />
    </svg>
  );
}

function TaskViewIcon() {
  return (
    <svg width="30" height="28" fill="none" stroke="#fff" strokeWidth="1.500">
      <path d="M1 0v4.500h19V0M1 8h19v12H1zM1 28v-4.500h19V28" />
      <path d="M28 0v5.500M28 13v15" />
      <path d="M26.500 8h3v3h-3z" fill="#fff" stroke="none" />
    </svg>
  );
}

function EdgeIcon() {
  return (
    <svg width="43" height="43" viewBox="0 0 43 43">
      <defs>
        <linearGradient id="edge-top" x1="0" y1="0.3" x2="1" y2="0.5">
          <stop offset="0" stopColor="#2aa6ea" />
          <stop offset="0.5" stopColor="#2cc5c9" />
          <stop offset="1" stopColor="#66e34f" />
        </linearGradient>
        <linearGradient id="edge-left" x1="0" y1="0" x2="0.6" y2="1">
          <stop offset="0" stopColor="#1b9fe6" />
          <stop offset="1" stopColor="#0b62c8" />
        </linearGradient>
      </defs>
      <path d="M0 22Q1 2 21 0q20 1 22 19 0 9-10 10-8 0-8-3 3-3 1-7-4-6-11-6Q4 13 0 22z" fill="url(#edge-top)" />
      <path d="M0 22Q4 12 14 13q10 0 11 8-9 1-9 10 2 10 12 11Q15 46 6 37 0 31 0 22z" fill="url(#edge-left)" />
      <path d="M25 21q-10 1-10 10 3 12 15 11 7-3 10.500-9-1-1-3 .5-7 2.500-12-2-4-3-2.500-7z" fill="#114fa0" />
    </svg>
  );
}

function ExplorerIcon() {
  return (
    <svg width="38" height="32">
      <path d="M1 0h14l3 4v6H1z" fill="#d99a10" />
      <path d="M0 5h15l3-3h18q2 0 2 2v25q0 2-2 2H2q-2 0-2-2z" fill="#fcd462" />
      <path d="M0 17h38v12q0 1.500-2 1.500H2Q0 30.500 0 29z" fill="#f9c846" fillOpacity="0.7" />
      <path d="M7 32V19q0-3 3-3h19q3 0 3 3v13h-6v-9H13v9z" fill="#3f95dd" />
      <path d="M13 23h13v8H13z" fill="#e9b23c" />
    </svg>
  );
}

function StoreIcon() {
  return (
    <svg width="40" height="42">
      <path d="M0 7h40v27q0 8-8 8H8q-8 0-8-8z" fill="#f1f1f1" />
      <path d="M9.500 9V2q0-1 1-1h19q1 0 1 1v7" fill="none" stroke="#1ba5ea" strokeWidth="3" />
      <path d="M11 15h8.500v8H11z" fill="#f25022" />
      <path d="M20.500 15H29v8h-8.500z" fill="#7fba00" />
      <path d="M11 24.500h8.500v8H11z" fill="#00a4ef" />
      <path d="M20.500 24.500H29v8h-8.500z" fill="#ffb900" />
    </svg>
  );
}

function MailIcon() {
  return (
    <svg width="43" height="40">
      <path d="M0 12L21.500 0 43 12v10H0z" fill="#0a5bb3" />
      <path d="M3 12h37L22 27z" fill="#f0f0f0" />
      <path d="M0 12l21.500 14L43 12v27H0z" fill="#1b98ea" />
      <path d="M43 12v27L21.500 26z" fill="#42c8f5" />
      <path d="M0 39l21.500-15L43 39z" fill="#1f86dd" fillOpacity="0.6" />
    </svg>
  );
}
